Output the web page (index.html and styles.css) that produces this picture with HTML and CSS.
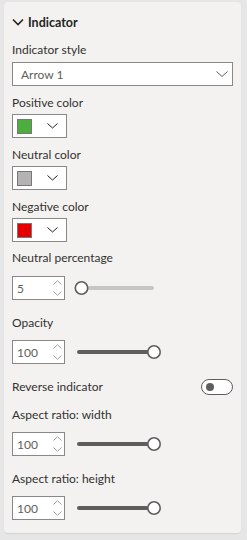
FILE: index.html
```html
<!DOCTYPE html>
<html lang="en">
  <head>
    <meta charset="UTF-8" />
    <meta name="viewport" content="width=device-width, initial-scale=1.0" />
    <title>Indicator</title>
    <link rel="stylesheet" href="styles.css">
  </head>
  <body>
    <main class="pane">
      <header class="card-head">
        <svg class="caret" width="12" height="8" viewBox="0 0 12 8"><path d="M1 1.5 L6 6.5 L11 1.5" fill="none" stroke="#252423" stroke-width="1.6"/></svg>
        <span>Indicator</span>
      </header>

      <section class="field first">
        <p class="label">Indicator style</p>
        <div class="select">
          <span>Arrow 1</span>
          <svg width="12" height="6" viewBox="0 0 12 6"><path d="M0.5 0.5 L6 5.5 L11.5 0.5" fill="none" stroke="#605e5c" stroke-width="1"/></svg>
        </div>
      </section>

      <section class="field color">
        <p class="label">Positive color</p>
        <div class="picker">
          <span class="swatch green"></span>
          <svg width="11" height="6" viewBox="0 0 11 6"><path d="M0.5 0.5 L5.5 5 L10.5 0.5" fill="none" stroke="#201f1e" stroke-width="1"/></svg>
        </div>
      </section>

      <section class="field color">
        <p class="label">Neutral color</p>
        <div class="picker">
          <span class="swatch grey"></span>
          <svg width="11" height="6" viewBox="0 0 11 6"><path d="M0.5 0.5 L5.5 5 L10.5 0.5" fill="none" stroke="#201f1e" stroke-width="1"/></svg>
        </div>
      </section>

      <section class="field color">
        <p class="label">Negative color</p>
        <div class="picker">
          <span class="swatch red"></span>
          <svg width="11" height="6" viewBox="0 0 11 6"><path d="M0.5 0.5 L5.5 5 L10.5 0.5" fill="none" stroke="#201f1e" stroke-width="1"/></svg>
        </div>
      </section>

      <section class="field slide-top">
        <p class="label">Neutral percentage</p>
        <div class="row">
          <div class="num">
            <span>5</span>
            <svg class="spin" width="9" height="16" viewBox="0 0 9 16"><path d="M0.5 4.5 L4.5 0.8 L8.5 4.5 M0.5 11.5 L4.5 15.2 L8.5 11.5" fill="none" stroke="#a19f9d" stroke-width="1"/></svg>
          </div>
          <svg class="slider" width="88" height="16" viewBox="0 0 88 16">
            <line x1="5" y1="8" x2="78" y2="8" stroke="#c8c6c4" stroke-width="4" stroke-linecap="round"/>
            <circle cx="7.5" cy="8" r="6.2" fill="#fff" stroke="#605e5c" stroke-width="1.6"/>
          </svg>
        </div>
      </section>

      <section class="field slide">
        <p class="label">Opacity</p>
        <div class="row">
          <div class="num">
            <span>100</span>
            <svg class="spin" width="9" height="16" viewBox="0 0 9 16"><path d="M0.5 4.5 L4.5 0.8 L8.5 4.5 M0.5 11.5 L4.5 15.2 L8.5 11.5" fill="none" stroke="#a19f9d" stroke-width="1"/></svg>
          </div>
          <svg class="slider" width="88" height="16" viewBox="0 0 88 16">
            <line x1="5" y1="8" x2="78" y2="8" stroke="#605e5c" stroke-width="4" stroke-linecap="round"/>
            <circle cx="80" cy="8" r="6.2" fill="#fff" stroke="#605e5c" stroke-width="1.6"/>
          </svg>
        </div>
      </section>

      <section class="toggle-row">
        <p class="label">Reverse indicator</p>
        <span class="toggle"><span class="knob"></span></span>
      </section>

      <section class="field after-toggle">
        <p class="label">Aspect ratio: width</p>
        <div class="row">
          <div class="num">
            <span>100</span>
            <svg class="spin" width="9" height="16" viewBox="0 0 9 16"><path d="M0.5 4.5 L4.5 0.8 L8.5 4.5 M0.5 11.5 L4.5 15.2 L8.5 11.5" fill="none" stroke="#a19f9d" stroke-width="1"/></svg>
          </div>
          <svg class="slider" width="88" height="16" viewBox="0 0 88 16">
            <line x1="5" y1="8" x2="78" y2="8" stroke="#605e5c" stroke-width="4" stroke-linecap="round"/>
            <circle cx="80" cy="8" r="6.2" fill="#fff" stroke="#605e5c" stroke-width="1.6"/>
          </svg>
        </div>
      </section>

      <section class="field slide">
        <p class="label">Aspect ratio: height</p>
        <div class="row">
          <div class="num">
            <span>100</span>
            <svg class="spin" width="9" height="16" viewBox="0 0 9 16"><path d="M0.5 4.5 L4.5 0.8 L8.5 4.5 M0.5 11.5 L4.5 15.2 L8.5 11.5" fill="none" stroke="#a19f9d" stroke-width="1"/></svg>
          </div>
          <svg class="slider" width="88" height="16" viewBox="0 0 88 16">
            <line x1="5" y1="8" x2="78" y2="8" stroke="#605e5c" stroke-width="4" stroke-linecap="round"/>
            <circle cx="80" cy="8" r="6.2" fill="#fff" stroke="#605e5c" stroke-width="1.6"/>
          </svg>
        </div>
      </section>
    </main>
  </body>
</html>
```

FILE: styles.css
```css
body {
  margin: 0;
  padding: 2px 6px 6px 4px;
  background: #e6e6e6;
  font-family: "Lato", "Open Sans", sans-serif;
  font-size: 12px;
  color: #323130;
}
.pane {
  background: #f3f2f1;
  border-radius: 4px;
  padding: 8px 8px 10px 8px;
  box-shadow: 0 1px 1px rgba(0, 0, 0, 0.08);
}
.card-head {
  display: flex;
  align-items: center;
  height: 24px;
  gap: 4px;
  font-weight: bold;
  font-size: 12.5px;
  color: #252423;
}
.label {
  margin: 0;
  line-height: 16px;
}
.field.first {
  margin-top: 8px;
}
.field.first .label {
  margin-bottom: 4px;
}
.select {
  height: 22px;
  border: 1px solid #8a8886;
  background: #fff;
  display: flex;
  align-items: center;
  justify-content: space-between;
  padding: 0 4px 0 8px;
  color: #605e5c;
}
.field.color {
  margin-top: 9px;
}
.field.color .label {
  margin-bottom: 3px;
}
.picker {
  width: 49px;
  height: 22px;
  border: 1px solid #8a8886;
  background: #fff;
  display: flex;
  align-items: center;
  gap: 15px;
  padding-left: 4px;
}
.swatch {
  width: 13px;
  height: 13px;
  border: 1px solid #7a7876;
}
.green { background: #4cae3c; }
.grey { background: #b3b3b3; }
.red { background: #e60000; }
.row {
  display: flex;
  align-items: center;
  height: 30px;
  gap: 9px;
}
.field.slide-top {
  margin-top: 8px;
}
.field.slide-top .label {
  margin-bottom: 7px;
}
.field.slide {
  margin-top: 12px;
}
.field.after-toggle {
  margin-top: 11px;
}
.field.slide .label,
.field.after-toggle .label {
  margin-bottom: 6px;
}
.num {
  width: 45px;
  height: 22px;
  border: 1px solid #8a8886;
  background: #fff;
  display: flex;
  align-items: center;
  justify-content: space-between;
  padding: 0 2px 0 4px;
  color: #605e5c;
}
.toggle-row {
  margin-top: 11px;
  height: 18px;
  display: flex;
  align-items: center;
  justify-content: space-between;
}
.toggle {
  box-sizing: border-box;
  width: 32px;
  height: 16px;
  border: 1px solid #605e5c;
  border-radius: 8px;
  background: #fff;
  display: flex;
  align-items: center;
  padding-left: 4px;
}
.knob {
  width: 8px;
  height: 8px;
  border-radius: 50%;
  background: #605e5c;
}
```
